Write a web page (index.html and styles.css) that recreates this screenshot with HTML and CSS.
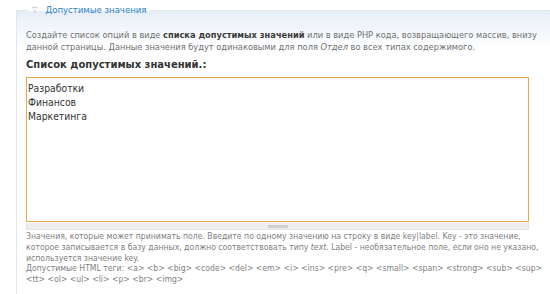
FILE: index.html
```html
<!DOCTYPE html>
<html lang="ru">
<head>
    <meta charset="UTF-8">
    <title>Допустимые значения</title>
    <link rel="stylesheet" href="styles.css">
</head>
<body>
    <div class="page">
        <fieldset class="collapsible">
            <legend><span class="toggle">&#9661;</span>Допустимые значения</legend>
            <p class="description">Создайте список опций в виде <strong>списка допустимых значений</strong> или в виде PHP кода, возвращающего массив, внизу данной страницы. Данные значения будут одинаковыми для поля <em>Отдел</em> во всех типах содержимого.</p>
            <div class="form-item">
                <label for="allowed-values">Список допустимых значений.:</label>
                <div class="resizable">
                    <textarea id="allowed-values" rows="10">Разработки
Финансов
Маркетинга</textarea>
                    <div class="grippie"></div>
                </div>
                <div class="help">Значения, которые может принимать поле. Введите по одному значению на строку в виде key|label. Key - это значение, которое записывается в базу данных, должно соответствовать типу <em>text</em>. Label - необязательное поле, если оно не указано, используется значение key.<br>Допустимые HTML теги: &lt;a&gt; &lt;b&gt; &lt;big&gt; &lt;code&gt; &lt;del&gt; &lt;em&gt; &lt;i&gt; &lt;ins&gt; &lt;pre&gt; &lt;q&gt; &lt;small&gt; &lt;span&gt; &lt;strong&gt; &lt;sub&gt; &lt;sup&gt; &lt;tt&gt; &lt;ol&gt; &lt;ul&gt; &lt;li&gt; &lt;p&gt; &lt;br&gt; &lt;img&gt;</div>
            </div>
        </fieldset>
    </div>
</body>
</html>
```

FILE: styles.css
```css
body {
    margin: 0;
    font-family: "DejaVu Sans Condensed", "DejaVu Sans", sans-serif;
    background-color: #ffffff;
    color: #494949;
}
.page {
    padding: 4px 0 0 16px;
}
fieldset.collapsible {
    margin: 0;
    border: none;
    border-top: 1px solid #dfe7ef;
    border-left: 1px solid #dfe7ef;
    background: linear-gradient(#e6eef6, #ffffff 38px);
    padding: 0 0 10px 9px;
}
legend {
    margin-left: 2px;
    padding: 0 4px;
    color: #2a80c4;
    font-size: 9.5px;
    line-height: 12px;
}
legend .toggle {
    display: inline-block;
    color: #a5b8c9;
    font-size: 8px;
    margin-right: 8px;
    vertical-align: 1px;
}
.description {
    margin: 13px 0 0;
    font-size: 9.2px;
    line-height: 12px;
    color: #707070;
}
.description strong {
    color: #3a3a3a;
}
.form-item {
    margin-top: 6px;
}
.form-item label {
    display: block;
    font-family: "DejaVu Sans", sans-serif;
    font-weight: bold;
    font-size: 10px;
    line-height: 12px;
    color: #333333;
    margin-bottom: 6px;
}
.resizable {
    width: 503px;
}
textarea {
    display: block;
    box-sizing: border-box;
    width: 100%;
    height: 145px;
    margin: 0;
    padding: 3px 1px;
    border: 1px solid #e3ab44;
    font-family: "DejaVu Sans Condensed", "DejaVu Sans", sans-serif;
    font-size: 10.3px;
    line-height: 14px;
    color: #333333;
    resize: none;
}
.grippie {
    height: 6px;
    margin-top: 1px;
    border: 1px solid #e4e4e4;
    border-top: none;
    background: #eeeeee;
    position: relative;
}
.grippie::after {
    content: "";
    position: absolute;
    left: 50%;
    top: 2px;
    width: 20px;
    height: 3px;
    margin-left: -10px;
    background: #d0d0d0;
}
.help {
    margin-top: 1px;
    font-size: 8.6px;
    line-height: 10.8px;
    color: #808080;
}
```
